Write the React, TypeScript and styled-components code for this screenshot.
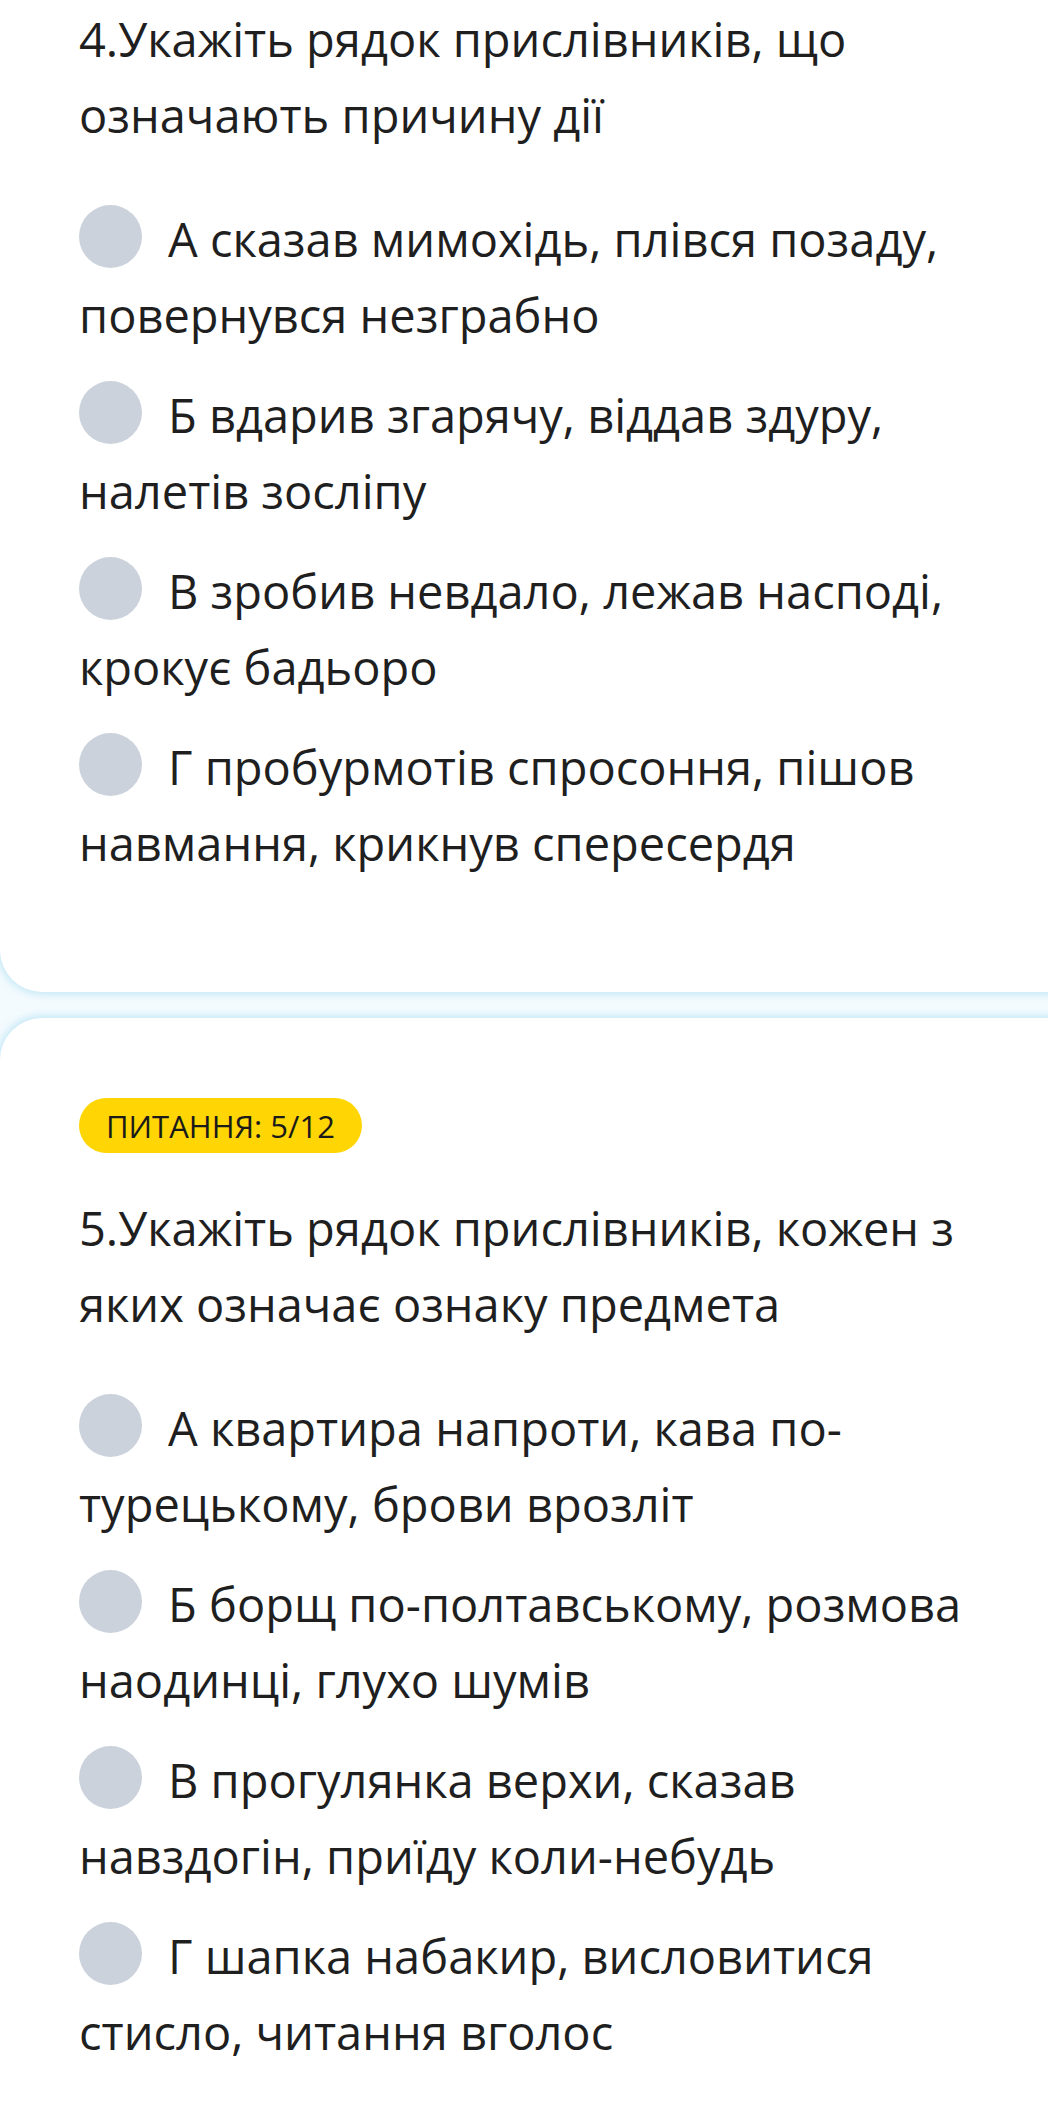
import React from 'react'
import styled, { createGlobalStyle } from 'styled-components'

const GlobalStyle = createGlobalStyle`
  html, body {
    margin: 0;
    padding: 0;
    background: #ffffff;
  }
  body {
    font-family: "Open Sans", "Noto Sans", "DejaVu Sans", sans-serif;
    color: #1f1f1f;
    overflow: hidden;
  }
`

const Page = styled.div`
  display: flex;
  flex-direction: column;
  gap: 26px;
  width: 1048px;
  background: #f4fbfe;
`

// cards run past the right edge of the viewport, so only the left corners are round
const Card = styled.section<{ $first?: boolean }>`
  background: #ffffff;
  border-radius: ${(p) => (p.$first ? '0 0 0 42px' : '42px 0 0 0')};
  box-shadow: 0 0 9px 2px rgba(150, 214, 240, 0.55);
  padding: ${(p) => (p.$first ? '1px 40px 111px 79px' : '80px 40px 120px 79px')};
  margin-right: -20px;
`

const Badge = styled.div`
  display: inline-flex;
  align-items: center;
  height: 55px;
  padding: 0 27px;
  border-radius: 28px;
  background: #ffd503;
  color: #1a1a1a;
  font-size: 31px;
  margin-bottom: 37px;
`

const Question = styled.div`
  font-size: 47px;
  line-height: 76px;
  margin-bottom: 48px;
`

const Options = styled.div`
  display: flex;
  flex-direction: column;
  gap: 24px;
`

const Option = styled.label`
  display: block;
  font-size: 47px;
  line-height: 76px;
  cursor: pointer;
`

const Radio = styled.span`
  display: inline-block;
  width: 63px;
  height: 63px;
  border-radius: 50%;
  background: #cbd2dc;
  vertical-align: -11px;
  margin-right: 26px;
`

type QuizQuestion = {
  number?: string
  text: string
  options: string[]
}

const q4: QuizQuestion = {
  text: '4.Укажіть рядок прислівників, що означають причину дії',
  options: [
    'А сказав мимохідь, плівся позаду, повернувся незграбно',
    'Б вдарив згарячу, віддав здуру, налетів зосліпу',
    'В зробив невдало, лежав насподі, крокує бадьоро',
    'Г пробурмотів спросоння, пішов навмання, крикнув спересердя',
  ],
}

const q5: QuizQuestion = {
  number: 'ПИТАННЯ: 5/12',
  text: '5.Укажіть рядок прислівників, кожен з яких означає ознаку предмета',
  options: [
    'А квартира напроти, кава по-турецькому, брови врозліт',
    'Б борщ по-полтавському, розмова наодинці, глухо шумів',
    'В прогулянка верхи, сказав навздогін, приїду коли-небудь',
    'Г шапка набакир, висловитися стисло, читання вголос',
  ],
}

const QuestionCard: React.FC<QuizQuestion & { first?: boolean }> = ({ number, text, options, first }) => (
  <Card $first={first}>
    {number && <Badge>{number}</Badge>}
    <Question>{text}</Question>
    <Options>
      {options.map((o) => (
        <Option key={o}>
          <Radio />
          {o}
        </Option>
      ))}
    </Options>
  </Card>
)

const App: React.FC = () => (
  <>
    <GlobalStyle />
    <Page>
      <QuestionCard first {...q4} />
      <QuestionCard {...q5} />
    </Page>
  </>
)

export default App
